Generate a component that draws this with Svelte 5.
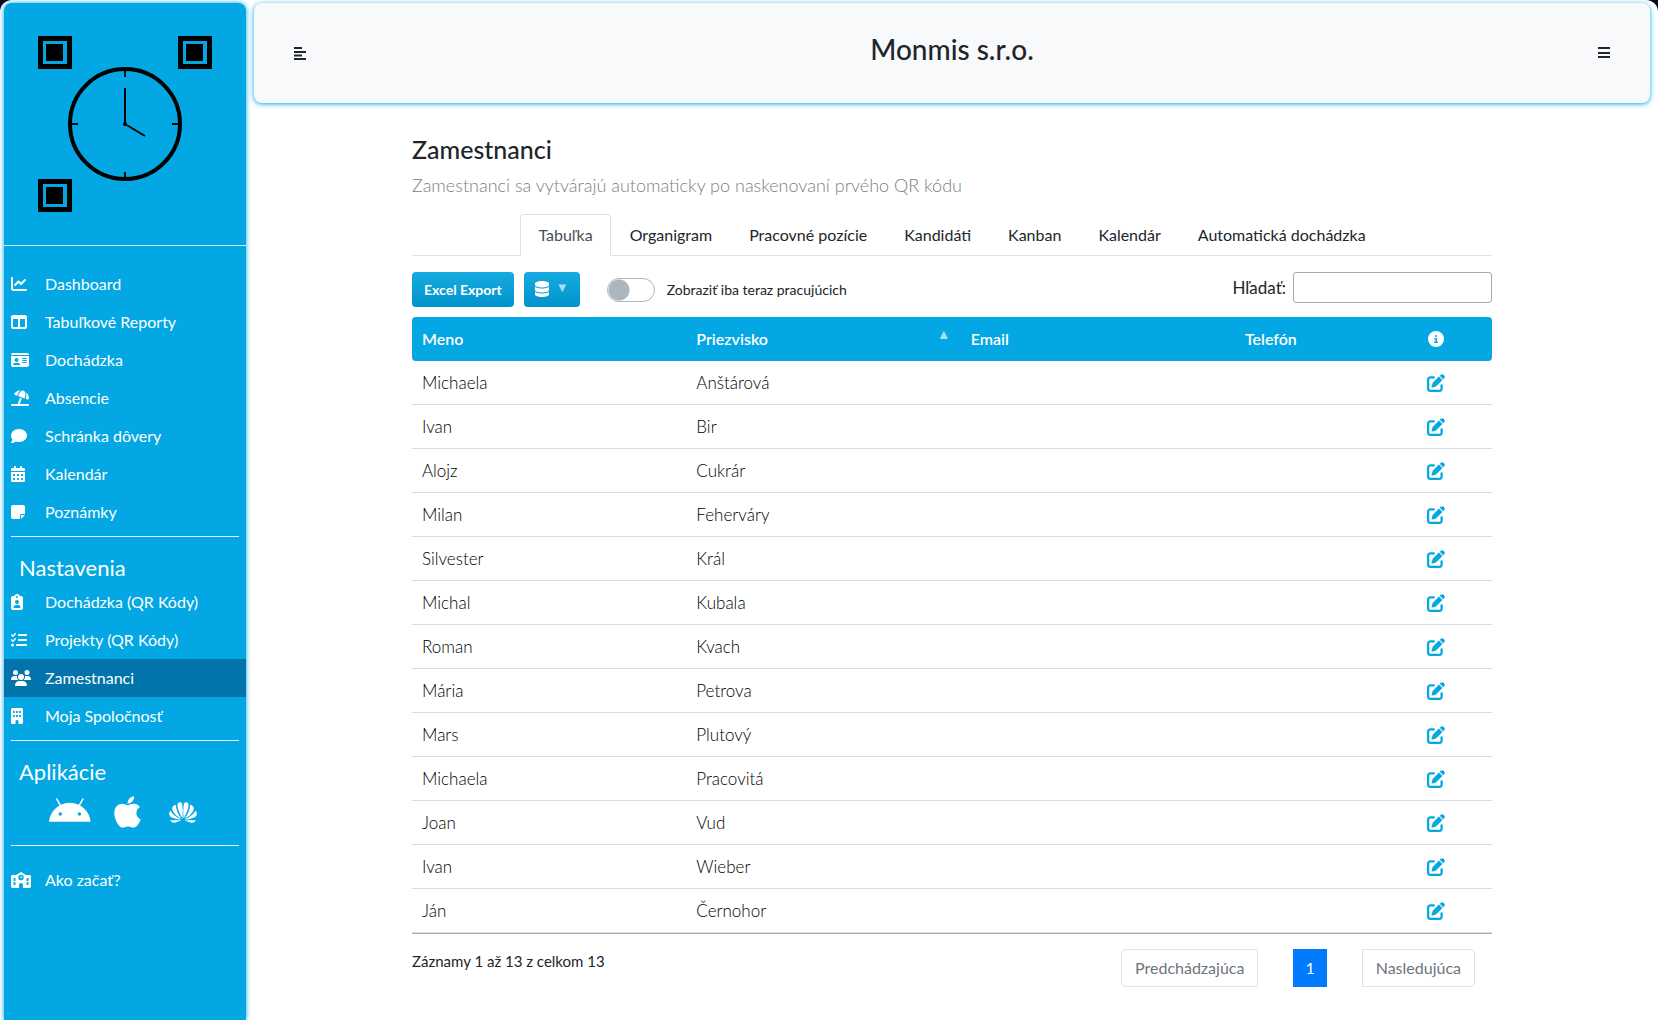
<script>
  const icons = {
    chart: [512, 'M64 64c0-17.7-14.3-32-32-32S0 46.3 0 64V400c0 44.2 35.8 80 80 80H480c17.7 0 32-14.3 32-32s-14.3-32-32-32H80c-8.8 0-16-7.2-16-16V64zm406.6 86.6c12.5-12.5 12.5-32.8 0-45.3s-32.8-12.5-45.3 0L320 210.7l-57.4-57.4c-12.5-12.5-32.8-12.5-45.3 0l-112 112c-12.5 12.5-12.5 32.8 0 45.3s32.8 12.5 45.3 0L240 221.3l57.4 57.4c12.5 12.5 32.8 12.5 45.3 0l128-128z'],
    columns: [512, 'M0 96C0 60.7 28.7 32 64 32H448c35.3 0 64 28.7 64 64V416c0 35.3-28.7 64-64 64H64c-35.3 0-64-28.7-64-64V96zm64 64V416H224V160H64zm384 0H288V416H448V160z'],
    idCard: [576, 'M0 96l576 0c0-35.3-28.7-64-64-64H64C28.7 32 0 60.7 0 96zm0 32V416c0 35.3 28.7 64 64 64H512c35.3 0 64-28.7 64-64V128H0zM64 405.3c0-29.5 23.9-53.3 53.3-53.3H234.7c29.5 0 53.3 23.9 53.3 53.3c0 5.9-4.8 10.7-10.7 10.7H74.7c-5.9 0-10.7-4.8-10.7-10.7zM176 192a64 64 0 1 1 0 128 64 64 0 1 1 0-128zm176 16c0-8.8 7.2-16 16-16H496c8.8 0 16 7.2 16 16s-7.2 16-16 16H368c-8.8 0-16-7.2-16-16zm0 64c0-8.8 7.2-16 16-16H496c8.8 0 16 7.2 16 16s-7.2 16-16 16H368c-8.8 0-16-7.2-16-16zm0 64c0-8.8 7.2-16 16-16H496c8.8 0 16 7.2 16 16s-7.2 16-16 16H368c-8.8 0-16-7.2-16-16z'],
    beach: [576, 'M346.3 271.8l-60.1-21.9L214 448H32c-17.7 0-32 14.3-32 32s14.3 32 32 32H544c17.7 0 32-14.3 32-32s-14.3-32-32-32H282.1l64.1-176.2zm121.1-.2l-3.3 9.1 67.7 24.6c18.1 6.6 38-4.2 39.6-23.4c6.5-78.5-23.9-155.5-80.8-208.5c2 8 3.2 16.3 3.4 24.8l.2 6c1.8 57-7.3 113.8-26.8 167.4zM462 99.1c-1.1-34.4-22.5-64.8-54.4-77.4c-.9-.4-1.9-.7-2.8-1.1c-33-11.7-69.8-2.4-93.1 23.8l-4 4.5C272.4 88.3 245 134.2 226.8 184l-3.3 9.1L434 269.7l3.3-9.1c18.1-49.8 26.6-102.5 24.9-155.5l-.2-6zM107.2 112.9c-11.1 15.7-2.8 36.8 15.3 43.4l71 25.8 3.3-9.1c19.5-53.6 49.1-103 87.1-145.5l4-4.5c6.2-6.9 13.1-13 20.5-18.2c-79.6 2.5-154.7 42.2-201.2 108z'],
    comment: [512, 'M512 240c0 114.9-114.6 208-256 208c-37.1 0-72.3-6.4-104.1-17.9c-11.9 8.7-31.3 20.6-54.3 30.6C73.6 471.1 44.7 480 16 480c-6.5 0-12.3-3.9-14.8-9.9c-2.5-6-1.1-12.8 3.4-17.4l.3-.3c.3-.3 .7-.7 1.3-1.4c1.1-1.2 2.8-3.1 4.9-5.7c4.1-5 9.6-12.4 15.2-21.6c10-16.6 19.5-38.4 21.4-62.9C17.7 326.8 0 285.1 0 240C0 125.1 114.6 32 256 32s256 93.1 256 208z'],
    calendar: [448, 'M128 0c17.7 0 32 14.3 32 32V64H288V32c0-17.7 14.3-32 32-32s32 14.3 32 32V64h48c26.5 0 48 21.5 48 48v48H0V112C0 85.5 21.5 64 48 64H96V32c0-17.7 14.3-32 32-32zM0 192H448V464c0 26.5-21.5 48-48 48H48c-26.5 0-48-21.5-48-48V192zm64 80v32c0 8.8 7.2 16 16 16h32c8.8 0 16-7.2 16-16V272c0-8.8-7.2-16-16-16H80c-8.8 0-16 7.2-16 16zm128 0v32c0 8.8 7.2 16 16 16h32c8.8 0 16-7.2 16-16V272c0-8.8-7.2-16-16-16H208c-8.8 0-16 7.2-16 16zm144-16c-8.8 0-16 7.2-16 16v32c0 8.8 7.2 16 16 16h32c8.8 0 16-7.2 16-16V272c0-8.8-7.2-16-16-16H336zM64 400v32c0 8.8 7.2 16 16 16h32c8.8 0 16-7.2 16-16V400c0-8.8-7.2-16-16-16H80c-8.8 0-16 7.2-16 16zm144-16c-8.8 0-16 7.2-16 16v32c0 8.8 7.2 16 16 16h32c8.8 0 16-7.2 16-16V400c0-8.8-7.2-16-16-16H208zm112 16v32c0 8.8 7.2 16 16 16h32c8.8 0 16-7.2 16-16V400c0-8.8-7.2-16-16-16H336c-8.8 0-16 7.2-16 16z'],
    note: [448, 'M64 32C28.7 32 0 60.7 0 96V416c0 35.3 28.7 64 64 64H288V368c0-26.5 21.5-48 48-48H448V96c0-35.3-28.7-64-64-64H64zM448 352H402.7 336c-8.8 0-16 7.2-16 16v66.7V480l32-32 64-64 32-32z'],
    clipboard: [384, 'M192 0c-41.8 0-77.4 26.7-90.5 64H64C28.7 64 0 92.7 0 128V448c0 35.3 28.7 64 64 64H320c35.3 0 64-28.7 64-64V128c0-35.3-28.7-64-64-64H282.5C269.4 26.7 233.8 0 192 0zm0 64a32 32 0 1 1 0 64 32 32 0 1 1 0-64zM128 256a64 64 0 1 1 128 0 64 64 0 1 1 -128 0zM80 432c0-44.2 35.8-80 80-80h64c44.2 0 80 35.8 80 80c0 8.8-7.2 16-16 16H96c-8.8 0-16-7.2-16-16z'],
    tasks: [512, 'M152.1 38.2c9.9 8.9 10.7 24 1.8 33.9l-72 80c-4.4 4.9-10.6 7.8-17.2 7.9s-12.9-2.4-17.6-7L7 113C-2.3 103.6-2.3 88.4 7 79s24.6-9.4 33.9 0l22.1 22.1 55.1-61.2c8.9-9.9 24-10.7 33.9-1.8zm0 160c9.9 8.9 10.7 24 1.8 33.9l-72 80c-4.4 4.9-10.6 7.8-17.2 7.9s-12.9-2.4-17.6-7L7 273c-9.4-9.4-9.4-24.6 0-33.9s24.6-9.4 33.9 0l22.1 22.1 55.1-61.2c8.9-9.9 24-10.7 33.9-1.8zM224 96c0-17.7 14.3-32 32-32H480c17.7 0 32 14.3 32 32s-14.3 32-32 32H256c-17.7 0-32-14.3-32-32zm0 160c0-17.7 14.3-32 32-32H480c17.7 0 32 14.3 32 32s-14.3 32-32 32H256c-17.7 0-32-14.3-32-32zM160 416c0-17.7 14.3-32 32-32H480c17.7 0 32 14.3 32 32s-14.3 32-32 32H192c-17.7 0-32-14.3-32-32zM48 368a48 48 0 1 1 0 96 48 48 0 1 1 0-96z'],
    users: [640, 'M144 0a80 80 0 1 1 0 160A80 80 0 1 1 144 0zM512 0a80 80 0 1 1 0 160A80 80 0 1 1 512 0zM0 298.7C0 239.8 47.8 192 106.7 192h42.7c15.9 0 31 3.5 44.6 9.7c-1.3 7.2-1.9 14.7-1.9 22.3c0 38.2 16.8 72.5 43.3 96c-.2 0-.4 0-.7 0H21.3C9.6 320 0 310.4 0 298.7zM405.3 320c-.2 0-.4 0-.7 0c26.6-23.5 43.3-57.8 43.3-96c0-7.6-.7-15-1.9-22.3c13.6-6.3 28.7-9.7 44.6-9.7h42.7C592.2 192 640 239.8 640 298.7c0 11.8-9.6 21.3-21.3 21.3H405.3zM224 224a96 96 0 1 1 192 0 96 96 0 1 1 -192 0zM128 485.3C128 411.7 187.7 352 261.3 352H378.7C452.3 352 512 411.7 512 485.3c0 14.7-11.9 26.7-26.7 26.7H154.7c-14.7 0-26.7-11.9-26.7-26.7z'],
    building: [384, 'M48 0C21.5 0 0 21.5 0 48V464c0 26.5 21.5 48 48 48h96V432c0-26.5 21.5-48 48-48s48 21.5 48 48v80h96c26.5 0 48-21.5 48-48V48c0-26.5-21.5-48-48-48H48zM64 240c0-8.8 7.2-16 16-16h32c8.8 0 16 7.2 16 16v32c0 8.8-7.2 16-16 16H80c-8.8 0-16-7.2-16-16V240zm112-16h32c8.8 0 16 7.2 16 16v32c0 8.8-7.2 16-16 16H176c-8.8 0-16-7.2-16-16V240c0-8.8 7.2-16 16-16zm80 16c0-8.8 7.2-16 16-16h32c8.8 0 16 7.2 16 16v32c0 8.8-7.2 16-16 16H272c-8.8 0-16-7.2-16-16V240zM80 96h32c8.8 0 16 7.2 16 16v32c0 8.8-7.2 16-16 16H80c-8.8 0-16-7.2-16-16V112c0-8.8 7.2-16 16-16zm80 16c0-8.8 7.2-16 16-16h32c8.8 0 16 7.2 16 16v32c0 8.8-7.2 16-16 16H176c-8.8 0-16-7.2-16-16V112zM272 96h32c8.8 0 16 7.2 16 16v32c0 8.8-7.2 16-16 16H272c-8.8 0-16-7.2-16-16V112c0-8.8 7.2-16 16-16z'],
    school: [640, 'M337.8 5.4C327-1.8 313-1.8 302.2 5.4L166.3 96H48C21.5 96 0 117.5 0 144V464c0 26.5 21.5 48 48 48H256V416c0-35.3 28.7-64 64-64s64 28.7 64 64v96H592c26.5 0 48-21.5 48-48V144c0-26.5-21.5-48-48-48H473.7L337.8 5.4zM96 192h32c8.8 0 16 7.2 16 16v64c0 8.8-7.2 16-16 16H96c-8.8 0-16-7.2-16-16V208c0-8.8 7.2-16 16-16zm400 16c0-8.8 7.2-16 16-16h32c8.8 0 16 7.2 16 16v64c0 8.8-7.2 16-16 16H512c-8.8 0-16-7.2-16-16V208zM96 320h32c8.8 0 16 7.2 16 16v64c0 8.8-7.2 16-16 16H96c-8.8 0-16-7.2-16-16V336c0-8.8 7.2-16 16-16zm400 16c0-8.8 7.2-16 16-16h32c8.8 0 16 7.2 16 16v64c0 8.8-7.2 16-16 16H512c-8.8 0-16-7.2-16-16V336zM232 176a88 88 0 1 1 176 0 88 88 0 1 1 -176 0zm88-48c-8.8 0-16 7.2-16 16v32c0 8.8 7.2 16 16 16h32c8.8 0 16-7.2 16-16s-7.2-16-16-16H336V144c0-8.8-7.2-16-16-16z'],
    database: [448, 'M448 80v48c0 44.2-100.3 80-224 80S0 172.2 0 128V80C0 35.8 100.3 0 224 0S448 35.8 448 80zM393.2 214.7c20.8-7.4 39.9-16.9 54.8-28.6V288c0 44.2-100.3 80-224 80S0 332.2 0 288V186.1c14.9 11.8 34 21.2 54.8 28.6C99.7 230.7 159.5 240 224 240s124.3-9.3 169.2-25.3zM0 346.1c14.9 11.8 34 21.2 54.8 28.6C99.7 390.7 159.5 400 224 400s124.3-9.3 169.2-25.3c20.8-7.4 39.9-16.9 54.8-28.6V432c0 44.2-100.3 80-224 80S0 476.2 0 432V346.1z'],
    info: [512, 'M256 512A256 256 0 1 0 256 0a256 256 0 1 0 0 512zM216 336h24V272H216c-13.3 0-24-10.7-24-24s10.7-24 24-24h48c13.3 0 24 10.7 24 24v88h8c13.3 0 24 10.7 24 24s-10.7 24-24 24H216c-13.3 0-24-10.7-24-24s10.7-24 24-24zm40-208a32 32 0 1 1 0 64 32 32 0 1 1 0-64z'],
    edit: [512, 'M471.6 21.7c-21.9-21.9-57.3-21.9-79.2 0L362.3 51.7l97.9 97.9 30.1-30.1c21.9-21.9 21.9-57.3 0-79.2L471.6 21.7zm-299.2 220c-6.1 6.1-10.8 13.6-13.5 21.9l-29.6 88.8c-2.9 8.6-.6 18.1 5.8 24.6s15.9 8.7 24.6 5.8l88.8-29.6c8.2-2.7 15.7-7.4 21.9-13.5L437.7 172.3 339.7 74.3 172.4 241.7zM96 64C43 64 0 107 0 160V416c0 53 43 96 96 96H352c53 0 96-43 96-96V320c0-17.7-14.3-32-32-32s-32 14.3-32 32v96c0 17.7-14.3 32-32 32H96c-17.7 0-32-14.3-32-32V160c0-17.7 14.3-32 32-32h96c17.7 0 32-14.3 32-32s-14.3-32-32-32H96z'],
    android: [576, 'M420.55,301.93a24,24,0,1,1,24-24,24,24,0,0,1-24,24m-265.1,0a24,24,0,1,1,24-24,24,24,0,0,1-24,24m273.7-144.48,47.94-83a10,10,0,1,0-17.27-10h0l-48.54,84.07a301.25,301.25,0,0,0-246.56,0L116.18,64.45a10,10,0,1,0-17.27,10h0l47.94,83C64.53,202.22,8.24,285.55,0,384H576c-8.24-98.45-64.54-181.78-146.85-226.55'],
    apple: [384, 'M318.7 268.7c-.2-36.7 16.4-64.4 50-84.8-18.8-26.9-47.2-41.7-84.7-44.6-35.5-2.8-74.3 20.7-88.5 20.7-15 0-49.4-19.7-76.4-19.7C63.3 141.2 4 184.8 4 273.5q0 39.3 14.4 81.2c12.8 36.7 59 126.7 107.2 125.2 25.2-.6 43-17.9 75.8-17.9 31.8 0 48.3 17.9 76.4 17.9 48.6-.7 90.4-82.5 102.6-119.3-65.2-30.7-61.7-90-61.7-91.9zm-56.6-164.2c27.3-32.4 24.8-61.9 24-72.5-24.1 1.4-52 16.4-67.9 34.9-17.5 19.8-27.8 44.3-25.6 71.9 26.1 2 49.9-11.4 69.5-34.3z'],
  };

  const mainNav = [
    ['chart', 'Dashboard'],
    ['columns', 'Tabuľkové Reporty'],
    ['idCard', 'Dochádzka'],
    ['beach', 'Absencie'],
    ['comment', 'Schránka dôvery'],
    ['calendar', 'Kalendár'],
    ['note', 'Poznámky'],
  ];
  const settingsNav = [
    ['clipboard', 'Dochádzka (QR Kódy)'],
    ['tasks', 'Projekty (QR Kódy)'],
    ['users', 'Zamestnanci'],
    ['building', 'Moja Spoločnosť'],
  ];
  const helpNav = [['school', 'Ako začať?']];

  const tabs = ['Tabuľka', 'Organigram', 'Pracovné pozície', 'Kandidáti', 'Kanban', 'Kalendár', 'Automatická dochádzka'];

  const employees = [
    ['Michaela', 'Anštárová'],
    ['Ivan', 'Bir'],
    ['Alojz', 'Cukrár'],
    ['Milan', 'Feherváry'],
    ['Silvester', 'Král'],
    ['Michal', 'Kubala'],
    ['Roman', 'Kvach'],
    ['Mária', 'Petrova'],
    ['Mars', 'Plutový'],
    ['Michaela', 'Pracovitá'],
    ['Joan', 'Vud'],
    ['Ivan', 'Wieber'],
    ['Ján', 'Černohor'],
  ];

  let activeTab = $state('Tabuľka');
  let activePage = $state('Zamestnanci');
  let onlyWorking = $state(false);
  let query = $state('');
  let shown = $derived(
    employees.filter((e) => e.join(' ').toLowerCase().includes(query.toLowerCase()))
  );
</script>

{#snippet icon(name, cls)}
  <svg class="icon {cls}" viewBox="0 0 {icons[name][0]} 512" aria-hidden="true"><path d={icons[name][1]} /></svg>
{/snippet}

{#snippet navList(items)}
  <ul class="nav">
    {#each items as [name, label]}
      <li>
        <a href="#{name}" class:active={label === activePage} onclick={() => (activePage = label)}>
          <span class="slot">{@render icon(name, 'nav-icon')}</span>{label}
        </a>
      </li>
    {/each}
  </ul>
{/snippet}

<div class="page">
  <aside class="sidebar">
    <div class="logo">
      <svg viewBox="0 0 174 176" role="img" aria-label="QR hodiny">
        {#each [[0, 0], [140, 0], [0, 143]] as [x, y]}
          <rect x={x + 2.5} y={y + 2.5} width="29" height="28" fill="none" stroke="#000" stroke-width="5" />
          <rect x={x + 8} y={y + 8} width="17" height="17" />
        {/each}
        <circle cx="87" cy="88" r="55" fill="none" stroke="#000" stroke-width="4" />
        <path d="M87 33v8M87 136v8M32 88h8M134 88h8M87 88V52" fill="none" stroke="#000" stroke-width="2" />
        <path d="M87 88l20 12" stroke="#000" stroke-width="2" />
        <circle cx="87" cy="88" r="2" />
      </svg>
    </div>
    <nav class="menu">
      {@render navList(mainNav)}
      <hr />
      <h2>Nastavenia</h2>
      {@render navList(settingsNav)}
      <hr />
      <h2>Aplikácie</h2>
      <div class="apps">
        <a href="#android" aria-label="Android">{@render icon('android', 'android')}</a>
        <a href="#ios" aria-label="Apple">{@render icon('apple', 'apple')}</a>
        <a href="#huawei" class="last" aria-label="Huawei">
          <svg class="icon huawei" viewBox="0 0 28 21" aria-hidden="true">
            {#each [1, -1] as side}
              <g transform="translate(14 0) scale({side} 1)">
                <path d="M.6 16.5C.1 11 .2 4 1.2 1.2 2 0 4.5 0 5.4 1.8 6.2 5 3.5 11.5 .6 16.5z" />
                <path d="M1.4 17C5 12.5 7 7.5 7.2 2.8 9.5 3 11 5 10.8 7 10 11 5.5 14.8 1.4 17z" />
                <path d="M1.8 17.6C7 15 11 12 12.6 8.6 14 10.5 14.3 12.8 13 14.3 11 16.3 6 17.3 1.8 17.6z" />
                <path d="M1.8 18.3H12.8C12 20.2 10.2 21 8.3 20.7 6.5 20.3 4 19.3 1.8 18.3z" />
              </g>
            {/each}
          </svg>
        </a>
      </div>
      <hr />
      <div class="help">{@render navList(helpNav)}</div>
    </nav>
  </aside>

  <div class="body">
    <header class="topbar">
      <button class="plain" aria-label="Skryť menu">
        <svg width="12" height="13" viewBox="0 0 12 13" aria-hidden="true"><path d="M0 0h8v2H0zM0 4h12v2H0zM0 7.5h8v2H0zM0 11h12v2H0z" /></svg>
      </button>
      <h1>Monmis s.r.o.</h1>
      <button class="plain" aria-label="Menu">
        <svg width="12" height="12" viewBox="0 0 12 12" aria-hidden="true"><path d="M0 0h12v2H0zM0 5h12v2H0zM0 9h12v2H0z" /></svg>
      </button>
    </header>

    <main>
      <h3>Zamestnanci</h3>
      <p class="lead">Zamestnanci sa vytvárajú automaticky po naskenovaní prvého QR kódu</p>

      <div class="tabs" role="tablist">
        {#each tabs as tab}
          <button role="tab" aria-selected={tab === activeTab} class:active={tab === activeTab} onclick={() => (activeTab = tab)}>{tab}</button>
        {/each}
      </div>

      <div class="tools">
        <button class="blue">Excel Export</button>
        <button class="blue columns" aria-label="Databáza">{@render icon('database', 'db')}<span class="caret">▼</span></button>
        <label class="switch"><input type="checkbox" bind:checked={onlyWorking} />Zobraziť iba teraz pracujúcich</label>
        <label class="search">Hľadať: <input type="search" bind:value={query} /></label>
      </div>

      <table>
        <colgroup><col class="wide" /><col class="wide" /><col class="wide" /><col class="phone" /><col /></colgroup>
        <thead>
          <tr>
            <th>Meno</th>
            <th><span class="sorted">Priezvisko<span class="arrow">▲</span></span></th>
            <th>Email</th>
            <th>Telefón</th>
            <th class="action">{@render icon('info', 'info')}</th>
          </tr>
        </thead>
        <tbody>
          {#each shown as [first, last]}
            <tr>
              <td>{first}</td>
              <td>{last}</td>
              <td></td>
              <td></td>
              <td class="action"><button class="edit" aria-label="Upraviť {first} {last}">{@render icon('edit', 'pen')}</button></td>
            </tr>
          {/each}
        </tbody>
      </table>

      <div class="foot">
        <span>Záznamy 1 až 13 z celkom 13</span>
        <div class="pager">
          <button class="prev" disabled>Predchádzajúca</button>
          <button class="current" aria-current="page">1</button>
          <button class="next" disabled>Nasledujúca</button>
        </div>
      </div>
    </main>
  </div>
</div>

<style>
  :global(body) {
    background: #0a0a1e;
  }
  .page,
  .page * {
    box-sizing: border-box;
  }
  .page {
    display: flex;
    gap: 8px;
    min-height: 100vh;
    padding: 3px 8px 0 4px;
    background: #fff;
    border-radius: 12px 12px 0 0;
    color: #212529;
    font: 400 16px/24px Lato, 'Open Sans', sans-serif;
  }
  button,
  input {
    font: inherit;
    color: inherit;
  }
  button {
    cursor: pointer;
  }
  h1, h2, h3, p, ul {
    margin: 0;
    padding: 0;
  }
  .icon {
    display: block;
    height: 16px;
    fill: currentColor;
  }

  .sidebar {
    flex: none;
    width: 242px;
    background: #02a7e3;
    border-radius: 8px 8px 0 0;
    box-shadow: 0 0 5px #02a7e3;
    color: #fff;
  }
  .logo {
    padding: 33px 34px;
    border-bottom: 1px solid #d5f1fb;
  }
  .logo svg {
    display: block;
    width: 100%;
  }
  .menu {
    padding-top: 19px;
  }
  .nav {
    list-style: none;
  }
  .nav a {
    display: flex;
    align-items: center;
    height: 38px;
    padding: 0 7px;
    color: #fff;
    text-decoration: none;
  }
  .nav a.active {
    background: #0074ab;
  }
  .slot {
    width: 34px;
  }
  hr {
    height: 1px;
    margin: 5px 7px 0;
    border: 0;
    background: #e5f6fc;
  }
  h2 {
    padding: 19px 15px 3px;
    font-size: 22px;
    font-weight: 400;
    line-height: 24px;
  }
  .apps {
    display: flex;
    align-items: center;
    height: 50px;
    margin-bottom: 8px;
    padding-left: 45px;
    gap: 23px;
  }
  .apps a {
    color: #fff;
  }
  .apps .last {
    padding-left: 5px;
  }
  .apps + hr {
    margin-top: 0;
  }
  .android {
    height: 37px;
  }
  .apple {
    height: 36px;
  }
  .huawei {
    height: 21px;
  }
  .help {
    padding-top: 15px;
  }

  .body {
    flex: 1;
    min-width: 0;
  }
  .topbar {
    display: flex;
    align-items: center;
    justify-content: space-between;
    height: 100px;
    padding: 0 40px;
    background: #f8f9fb;
    border-radius: 8px;
    box-shadow: 0 1px 5px #02a7e3;
  }
  .plain {
    padding: 0;
    border: 0;
    background: none;
  }
  .plain svg {
    display: block;
    fill: #212529;
  }
  h1 {
    padding-bottom: 8px;
    font-size: 28px;
    font-weight: 500;
    line-height: 34px;
  }

  main {
    max-width: 1080px;
    margin: 0 auto;
    padding: 31px 0 16px;
  }
  h3 {
    font-size: 25px;
    font-weight: 500;
    line-height: 30px;
  }
  .lead {
    padding: 9px 0 17px;
    color: #808080;
    font-size: 18px;
    font-weight: 300;
  }
  .tabs {
    display: flex;
    justify-content: center;
    border-bottom: 1px solid #dee2e6;
  }
  .tabs button {
    height: 42px;
    margin-bottom: -1px;
    padding: 0 17px;
    border: 1px solid transparent;
    border-radius: 4px 4px 0 0;
    background: none;
  }
  .tabs button + button {
    margin-left: 1px;
  }
  .tabs button.active {
    border-color: #dee2e6 #dee2e6 #fff;
    background: #fff;
    color: #495057;
  }
  .tools {
    display: flex;
    align-items: flex-start;
    padding: 16px 0 10px;
  }
  .blue {
    height: 35px;
    padding: 0 12px;
    border: 0;
    border-radius: 4px;
    background: linear-gradient(#17abe2, #0093cb);
    color: #fff;
    font-size: 14px;
    font-weight: 700;
  }
  .columns {
    display: flex;
    gap: 7px;
    margin: 0 27px 0 10px;
    padding: 9px 11px;
  }
  .caret {
    color: #a6dff5;
    font-size: 13px;
    font-weight: 400;
    line-height: 12px;
  }
  .switch {
    display: flex;
    align-items: center;
    gap: 12px;
    height: 35px;
    font-size: 14px;
  }
  .switch input {
    appearance: none;
    width: 48px;
    height: 24px;
    margin: 0;
    border: 1px solid #adb5bd;
    border-radius: 12px;
    background: radial-gradient(circle at 11px 11px, #adb5bd 10px, transparent 11px);
  }
  .switch input:checked {
    background: radial-gradient(circle at 35px 11px, #02a7e3 10px, transparent 11px);
  }
  .search {
    display: flex;
    align-items: center;
    gap: 7px;
    margin-left: auto;
    font-size: 17px;
  }
  .search input {
    width: 199px;
    height: 31px;
    border: 1px solid #aaa;
    border-radius: 3px;
    background: transparent;
  }

  table {
    width: 100%;
    table-layout: fixed;
    border-collapse: separate;
    border-spacing: 0;
    border-bottom: 1px solid #aaa;
  }
  .wide {
    width: 25.4%;
  }
  .phone {
    width: 13.4%;
  }
  th,
  td {
    height: 44px;
    padding: 0 10px;
    text-align: left;
  }
  th {
    background: #02a7e3;
    color: #fff;
    font-weight: 600;
  }
  th:first-child {
    border-radius: 4px 0 0 4px;
  }
  th:last-child {
    border-radius: 0 4px 4px 0;
  }
  td {
    padding-top: 1px;
    border-bottom: 1px solid #ddd;
    font-size: 17px;
    font-weight: 300;
    color: #000;
  }
  .sorted {
    display: flex;
    justify-content: space-between;
  }
  .arrow {
    color: #a6dff5;
    font-size: 14px;
    font-weight: 400;
    line-height: 14px;
  }
  .info,
  .edit {
    margin: 0 auto;
  }
  .edit {
    display: block;
    padding: 0;
    border: 0;
    background: none;
    color: #02a7e3;
  }
  .pen {
    height: 18px;
  }

  .foot {
    display: flex;
    justify-content: space-between;
    padding-top: 15px;
    font-size: 15px;
  }
  .pager {
    display: flex;
    gap: 35px;
    padding-right: 17px;
    font-size: 16px;
  }
  .pager button {
    height: 38px;
    padding: 0 13px;
    border: 1px solid #dee2e6;
    background: #fff;
    color: #6c757d;
  }
  .pager .prev {
    border-radius: 4px 0 0 4px;
  }
  .pager .next {
    border-radius: 0 4px 4px 0;
  }
  .pager .current {
    padding: 0 11px;
    border-color: #007bff;
    background: #007bff;
    color: #fff;
  }
</style>
